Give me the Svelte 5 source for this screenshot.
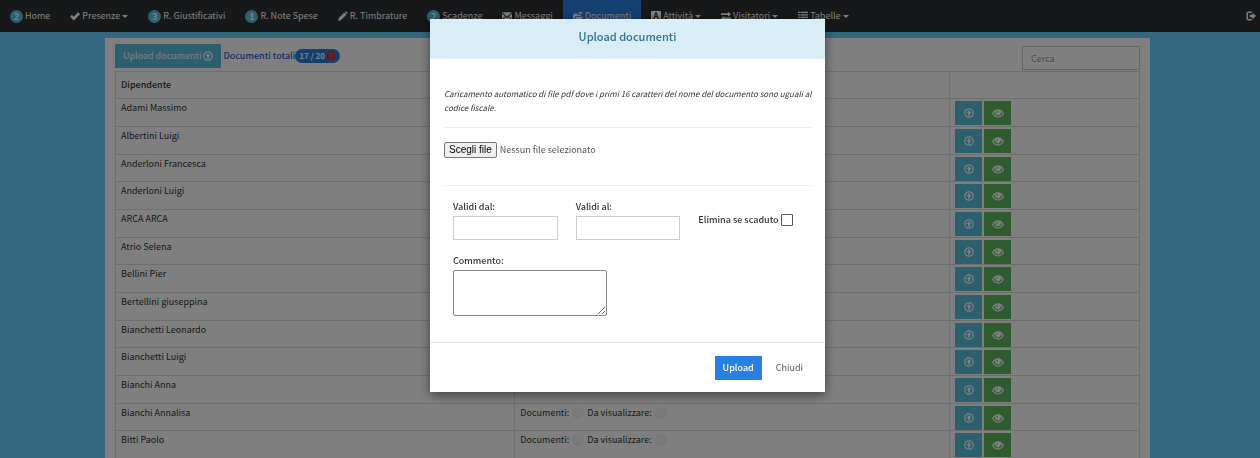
<script>
  let search = $state('');
  let fileName = $state('');
  let validFrom = $state('');
  let validTo = $state('');
  let deleteExpired = $state(false);
  let comment = $state('');
  let open = $state(true);

  const menu = [
    { label: 'Home', badge: 2 },
    { label: 'Presenze', icon: 'check', caret: true },
    { label: 'R. Giustificativi', badge: 3 },
    { label: 'R. Note Spese', badge: 1 },
    { label: 'R. Timbrature', icon: 'pencil' },
    { label: 'Scadenze', badge: 2 },
    { label: 'Messaggi', icon: 'envelope' },
    { label: 'Documenti', icon: 'folder', active: true },
    { label: 'Attività', icon: 'font', caret: true },
    { label: 'Visitatori', icon: 'transfer', caret: true },
    { label: 'Tabelle', icon: 'list', caret: true },
  ];

  const employees = [
    'Adami Massimo',
    'Albertini Luigi',
    'Anderloni Francesca',
    'Anderloni Luigi',
    'ARCA ARCA',
    'Atrio Selena',
    'Bellini Pier',
    'Bertellini giuseppina',
    'Bianchetti Leonardo',
    'Bianchetti Luigi',
    'Bianchi Anna',
    'Bianchi Annalisa',
    'Bitti Paolo',
  ];

  let filtered = $derived(
    employees.filter((name) => name.toLowerCase().includes(search.toLowerCase()))
  );

  function chooseFile(event) {
    fileName = event.target.files[0]?.name ?? '';
  }
</script>

{#snippet icon(name)}
  <svg class="icon" viewBox="0 0 16 16" aria-hidden="true">
    {#if name === 'check'}
      <path d="M0 9l3-3 3 3 7-7 3 3L6 15z" fill="currentColor" />
    {:else if name === 'pencil'}
      <path d="M0 16l1.500-5L10 2.500 13.500 6 5 14.500zM11 1.500L12.500 0 16 3.500 14.500 5z" fill="currentColor" />
    {:else if name === 'envelope'}
      <path d="M0 2h16L8 9zM0 4l5 4.500L0 13zM16 4v9l-5-4.500zM6 9.500l2 2 2-2 5.500 5H.500z" fill="currentColor" />
    {:else if name === 'folder'}
      <path d="M0 14V6h2V4h4l1 2h6v2H4l-2 6zM5 9h11l-3 6H2.500zM8 3l4-2v1h3v2h-3v1z" fill="currentColor" />
    {:else if name === 'font'}
      <path d="M0 0h16v16H0zM7 2L3.500 12H2v2h4v-2h-.500l.700-2h3.600l.700 2H10v2h4v-2h-1.500L9 2zM8 5l1.200 3H6.800z" fill="currentColor" fill-rule="evenodd" />
    {:else if name === 'transfer'}
      <path d="M0 3.500h11V1l5 4-5 4V6.500H0zM16 10.500H5V8l-5 4 5 4v-2.500h11z" fill="currentColor" />
    {:else if name === 'list'}
      <path d="M0 1h3v2H0zM4 1h12v2H4zM0 5h3v2H0zM4 5h12v2H4zM0 9h3v2H0zM4 9h12v2H4zM0 13h3v2H0zM4 13h12v2H4z" fill="currentColor" />
    {:else if name === 'logout'}
      <path d="M9 2H4a2 2 0 0 0-2 2v8a2 2 0 0 0 2 2h5" fill="none" stroke="currentColor" stroke-width="2.500" />
      <path d="M6 6h4V3l6 5-6 5v-3H6z" fill="currentColor" />
    {:else if name === 'upload'}
      <circle cx="8" cy="8" r="6.700" fill="none" stroke="currentColor" stroke-width="2" />
      <path d="M8 3.500L12 8H9.500v4h-3V8H4z" fill="currentColor" />
    {:else if name === 'eye'}
      <path d="M0 8.500C2 5 5 3 8 3s6 2 8 5.500C14 12 11 14 8 14S2 12 0 8.500zM2 8.500C4 11.500 6 12.500 8 12.500s4-1 6-4C13 7 12 6 11.500 5.500a4 4 0 1 1-7 0C4 6 3 7 2 8.500zM7 5a2 2 0 0 0-1 2.500L8 7z" fill="currentColor" fill-rule="evenodd" />
    {:else if name === 'alert'}
      <path d="M8 0a8 8 0 1 0 0 16A8 8 0 0 0 8 0zM6.500 3h3v6h-3zM6.500 10.500h3v2.500h-3z" fill="currentColor" fill-rule="evenodd" />
    {/if}
  </svg>
{/snippet}

<nav class="navbar">
  <ul class="menu">
    {#each menu as item}
      <li>
        <a href="#{item.label}" class:active={item.active}>
          {#if item.badge}
            <span class="badge">{item.badge}</span>
          {:else}
            {@render icon(item.icon)}
          {/if}
          <span>{item.label}</span>
          {#if item.caret}<span class="caret"></span>{/if}
        </a>
      </li>
    {/each}
  </ul>
  <a class="logout" href="#logout" aria-label="Esci">{@render icon('logout')}</a>
</nav>

<main class="container">
  <div class="toolbar">
    <button class="btn btn-info" onclick={() => (open = true)}>
      Upload documenti {@render icon('upload')}
    </button>
    <a class="totals" href="#totali">
      Documenti totali
      <span class="total-badge">17 / 20 <span class="alert">{@render icon('alert')}</span></span>
    </a>
    <input class="search" type="text" placeholder="Cerca" aria-label="Cerca" bind:value={search} />
  </div>

  <table>
    <thead>
      <tr>
        <th class="col-name">Dipendente</th>
        <th class="col-docs"></th>
        <th class="col-actions"></th>
      </tr>
    </thead>
    <tbody>
      {#each filtered as name}
        <tr>
          <td>{name}</td>
          <td>
            <div class="counts">
              Documenti: <span class="dot">0</span> Da visualizzare: <span class="dot">0</span>
            </div>
          </td>
          <td>
            <div class="actions">
              <button class="btn square btn-info" aria-label="Carica">{@render icon('upload')}</button>
              <button class="btn square btn-success" aria-label="Visualizza">{@render icon('eye')}</button>
            </div>
          </td>
        </tr>
      {/each}
    </tbody>
  </table>
</main>

{#if open}
  <div class="backdrop">
    <div class="modal" role="dialog" aria-modal="true" aria-labelledby="modal-title">
      <header class="modal-header">
        <h4 id="modal-title">Upload documenti</h4>
      </header>
      <div class="modal-body">
        <p class="hint">
          Caricamento automatico di file pdf dove i primi 16 caratteri del nome del documento sono uguali al codice fiscale.
        </p>
        <div class="file-row">
          <input id="file" class="file-input" type="file" accept=".pdf" onchange={chooseFile} />
          <label class="file-button" for="file">Scegli file</label>
          <span>{fileName || 'Nessun file selezionato'}</span>
        </div>
        <div class="fields">
          <div class="field">
            <label for="from">Validi dal:</label>
            <input id="from" type="text" bind:value={validFrom} />
          </div>
          <div class="field">
            <label for="to">Validi al:</label>
            <input id="to" type="text" bind:value={validTo} />
          </div>
          <div class="field check">
            <label for="expired">Elimina se scaduto</label>
            <input id="expired" type="checkbox" bind:checked={deleteExpired} />
          </div>
          <div class="field wide">
            <label for="comment">Commento:</label>
            <textarea id="comment" bind:value={comment}></textarea>
          </div>
        </div>
      </div>
      <footer class="modal-footer">
        <button class="btn btn-primary">Upload</button>
        <button class="btn btn-link" onclick={() => (open = false)}>Chiudi</button>
      </footer>
    </div>
  </div>
{/if}

<style>
  :global(body) {
    margin: 0;
    overflow: hidden;
    background: #67cdff;
    color: #333;
    font-family: 'Noto Sans CJK SC', 'Open Sans', sans-serif;
    font-size: 9px;
    line-height: 14px;
  }

  * {
    box-sizing: border-box;
  }

  button,
  input,
  textarea {
    font: inherit;
    color: inherit;
  }

  a {
    text-decoration: none;
  }

  .icon {
    width: 10px;
    height: 10px;
    flex: none;
  }

  .navbar {
    display: flex;
    justify-content: space-between;
    height: 32px;
    background: #2e3033;
  }

  .menu {
    display: flex;
    margin: 0;
    padding: 0;
    list-style: none;
  }

  .menu a,
  .logout {
    display: flex;
    align-items: center;
    gap: 2px;
    height: 100%;
    padding: 0 10px;
    color: #fff;
    white-space: nowrap;
  }

  .menu a.active {
    background: #2780e3;
  }

  .logout {
    padding: 0 4px;
  }

  .badge {
    width: 13px;
    height: 13px;
    border-radius: 50%;
    background: #5bc0de;
    line-height: 13px;
    text-align: center;
    font-weight: bold;
  }

  .caret {
    border: 3px solid transparent;
    border-top-color: currentColor;
    border-bottom: 0;
  }

  .container {
    min-height: 420px;
    margin: 6px 110px 0 105px;
    padding: 6px 10px 0;
    background: #fff;
  }

  .toolbar {
    display: flex;
    align-items: flex-start;
    gap: 2px;
    height: 27px;
  }

  .btn {
    display: flex;
    align-items: center;
    justify-content: center;
    gap: 2px;
    height: 24px;
    padding: 0 8px;
    border: 0;
    color: #fff;
  }

  .btn-info {
    background: #5bc0de;
  }

  .btn-success {
    background: #5cb85c;
  }

  .btn-primary {
    background: #2780e3;
    font-weight: 500;
  }

  .btn-link {
    background: transparent;
    color: #555;
  }

  .square {
    width: 27px;
  }

  .btn-success .icon {
    width: 12px;
    height: 12px;
  }

  .totals {
    display: flex;
    padding-top: 5px;
    color: #2a5fd0;
    font-weight: 500;
  }

  .total-badge {
    display: flex;
    align-items: center;
    gap: 1px;
    padding: 0 4px;
    border-radius: 7px;
    background: #2780e3;
    color: #fff;
    font-size: 8px;
    font-weight: bold;
  }

  .alert {
    display: flex;
    color: #d9302c;
  }

  .search {
    width: 118px;
    height: 24px;
    margin: 2px 0 0 auto;
    padding: 0 8px;
    border: 1px solid #ccc;
  }

  .search::placeholder {
    color: #999;
  }

  table {
    width: 100%;
    border-collapse: collapse;
    table-layout: fixed;
  }

  tr {
    height: 28px;
  }

  thead tr,
  tbody tr:nth-child(3n) {
    height: 27px;
  }

  th,
  td {
    padding: 2px 5px 0;
    border: 1px solid #ddd;
    text-align: left;
    vertical-align: top;
  }

  th {
    padding: 0 5px;
    vertical-align: middle;
    font-weight: 500;
  }

  .col-name {
    width: 39%;
  }

  .col-actions {
    width: 190px;
  }

  .counts {
    display: flex;
    align-items: center;
    gap: 3px;
  }

  .dot {
    width: 12px;
    height: 12px;
    border-radius: 50%;
    background: #f3f3f3;
    color: #f8f8f8;
    line-height: 12px;
    text-align: center;
  }

  .actions {
    display: flex;
    gap: 2px;
    margin-bottom: -2px;
  }

  .backdrop {
    position: fixed;
    inset: 0;
    display: flex;
    align-items: flex-start;
    justify-content: center;
    padding: 19px 5px 0 0;
    background: rgba(0, 0, 0, 0.5);
  }

  .modal {
    width: 395px;
    background: #fff;
    box-shadow: 0 3px 10px rgba(0, 0, 0, 0.5);
  }

  .modal-header {
    height: 40px;
    padding: 8px;
    background: #d9edf7;
  }

  h4 {
    margin: 0;
    color: #31708f;
    font-size: 11px;
    font-weight: 500;
    line-height: 18px;
    text-align: center;
  }

  .modal-body {
    padding: 28px 13px 0 14px;
  }

  .hint {
    margin: 0;
    padding-bottom: 12px;
    border-bottom: 1px solid #eee;
    font-size: 8px;
    font-style: italic;
  }

  .file-row {
    display: flex;
    align-items: center;
    gap: 3px;
    height: 58px;
    padding-bottom: 14px;
    border-bottom: 1px solid #eee;
    color: #555;
  }

  .file-input {
    position: absolute;
    width: 1px;
    height: 1px;
    opacity: 0;
  }

  .file-button {
    padding: 0 4px;
    border: 1px solid #767676;
    border-radius: 2px;
    background: #efefef;
    color: #000;
    font-family: 'Liberation Sans', Arial, sans-serif;
    font-size: 10px;
  }

  .fields {
    display: grid;
    grid-template-columns: repeat(3, 1fr);
    row-gap: 14px;
    padding: 14px 0 26px;
  }

  .field {
    display: flex;
    flex-direction: column;
    gap: 2px;
    padding: 0 9px;
    font-weight: 500;
  }

  .field input[type='text'] {
    width: 100%;
    height: 24px;
    padding: 0 8px;
    border: 1px solid #ccc;
  }

  .field.check {
    flex-direction: row;
    align-items: center;
    white-space: nowrap;
  }

  .check input {
    width: 12px;
    height: 12px;
    margin: 0;
    appearance: none;
    border: 1px solid #555;
    border-radius: 1px;
  }

  .check input:checked {
    background: #2780e3;
  }

  .wide {
    grid-column: span 3;
  }

  textarea {
    width: 154px;
    height: 46px;
    padding: 2px;
    border: 1px solid #8a8a8a;
    border-radius: 2px;
  }

  .modal-footer {
    display: flex;
    justify-content: flex-end;
    gap: 6px;
    padding: 13px 14px 12px;
    border-top: 1px solid #e5e5e5;
  }
</style>
